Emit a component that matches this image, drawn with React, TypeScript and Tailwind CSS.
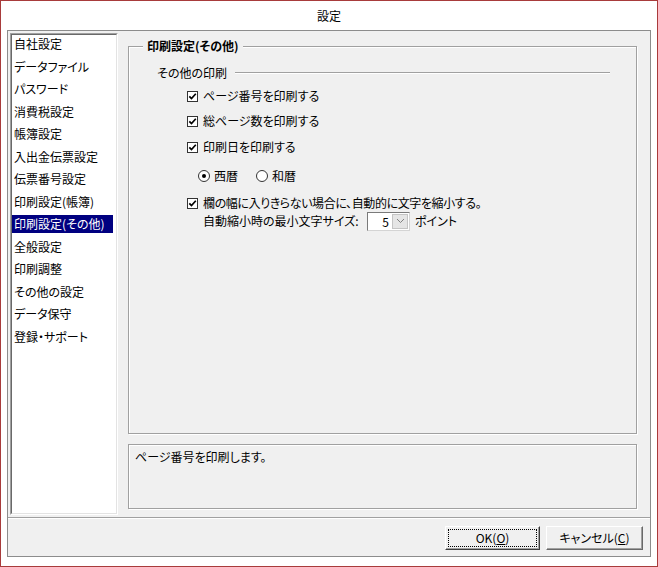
import React from 'react';

const menuItems = [
  '自社設定',
  'データファイル',
  'パスワード',
  '消費税設定',
  '帳簿設定',
  '入出金伝票設定',
  '伝票番号設定',
  '印刷設定(帳簿)',
  '印刷設定(その他)',
  '全般設定',
  '印刷調整',
  'その他の設定',
  'データ保守',
  '登録・サポート',
];

const CheckBox: React.FC = () => (
  <span className="w-[11px] h-[11px] border border-[#333333] bg-white flex items-center justify-center shrink-0">
    <svg width="9" height="9" viewBox="0 0 9 9">
      <path d="M1.3 4.3 L3.5 6.6 L7.8 1.8" fill="none" stroke="#000" strokeWidth="1.7" />
    </svg>
  </span>
);

const Radio: React.FC<{ checked?: boolean }> = ({ checked }) => (
  <span className="w-[12px] h-[12px] rounded-full border border-[#333333] bg-white flex items-center justify-center shrink-0">
    {checked && <span className="w-[4px] h-[4px] rounded-full bg-black" />}
  </span>
);

const ListBox: React.FC = () => (
  <div className="w-[108px] h-[482px] border border-t-[#a0a0a0] border-l-[#a0a0a0] border-r-white border-b-white">
    <div className="h-full border border-t-[#696969] border-l-[#696969] border-r-[#e3e3e3] border-b-[#e3e3e3] bg-white">
      {menuItems.map((item, i) => (
        <div key={item} className="h-[22.5px]">
          <div
            className={`h-[18px] mr-[3px] pl-[2px] flex items-center whitespace-nowrap ${
              i === 8 ? 'bg-[#000080] text-white' : ''
            }`}
          >
            {item}
          </div>
        </div>
      ))}
    </div>
  </div>
);

const App: React.FC = () => {
  return (
    <div className="w-[658px] h-[567px] bg-white border border-[#a83b3b] flex flex-col text-[12px] leading-[14px] text-black font-['Noto_Sans_CJK_JP',sans-serif] [font-feature-settings:'palt']">
      {/* title bar */}
      <div className="h-[29px] flex items-center justify-center">設定</div>

      {/* dialog frame */}
      <div className="ml-[6px] w-[644px] h-[527px] border border-[#8c8c8c] bg-[#f0f0f0] flex flex-col">
        <div className="h-[486px] flex pl-[2px] pt-[2px]">
          <ListBox />

          <div className="ml-[10px] w-[509px] flex flex-col">
            <fieldset className="mt-[6px] h-[395px] border border-[#a0a0a0] shadow-[inset_1px_1px_0_#ffffff,1px_1px_0_#ffffff]">
              <legend className="ml-[14px] px-[4px] font-bold bg-[#f0f0f0]">印刷設定(その他)</legend>

              <div className="pl-[28px] pr-[26px]">
                <div className="mt-[13px] flex items-center">
                  <span>その他の印刷</span>
                  <div className="ml-[8px] flex-1 h-[2px] border-t border-[#a0a0a0] border-b border-b-white" />
                </div>

                <div className="pl-[30px]">
                  <label className="mt-[9px] flex items-center gap-[5px]">
                    <CheckBox />
                    <span>ページ番号を印刷する</span>
                  </label>
                  <label className="mt-[11px] flex items-center gap-[5px]">
                    <CheckBox />
                    <span>総ページ数を印刷する</span>
                  </label>
                  <label className="mt-[12px] flex items-center gap-[5px]">
                    <CheckBox />
                    <span>印刷日を印刷する</span>
                  </label>

                  <div className="mt-[15px] pl-[11px] flex items-center">
                    <label className="flex items-center gap-[4px]">
                      <Radio checked />
                      <span>西暦</span>
                    </label>
                    <label className="ml-[18px] flex items-center gap-[4px]">
                      <Radio />
                      <span>和暦</span>
                    </label>
                  </div>

                  <label className="mt-[13px] flex items-center gap-[5px]">
                    <CheckBox />
                    <span className="tracking-[-0.4px]">欄の幅に入りきらない場合に、自動的に文字を縮小する。</span>
                  </label>
                  <div className="mt-[1px] pl-[16px] h-[20px] flex items-center">
                    <span className="w-[164px] whitespace-nowrap">自動縮小時の最小文字サイズ:</span>
                    <div className="w-[43px] h-[19px] flex border border-t-[#7a7a7a] border-l-[#7a7a7a] border-r-[#d4d4d4] border-b-[#d4d4d4] bg-white">
                      <span className="flex-1 text-right pr-[2px] leading-[17px]">5</span>
                      <span className="w-[16px] m-px bg-[#e5e5e5] border border-[#c4c4c4] flex items-center justify-center">
                        <svg width="9" height="6" viewBox="0 0 9 6">
                          <path d="M1 1 L4.5 4.5 L8 1" fill="none" stroke="#808080" strokeWidth="1" />
                        </svg>
                      </span>
                    </div>
                    <span className="ml-[5px]">ポイント</span>
                  </div>
                </div>
              </div>
            </fieldset>

            <div className="mt-[10px] h-[65px] border border-[#a0a0a0] shadow-[inset_1px_1px_0_#ffffff,1px_1px_0_#ffffff] pl-[6px] pt-[5px]">
              ページ番号を印刷します。
            </div>
          </div>
        </div>

        {/* separator */}
        <div className="h-[2px] border-t border-[#a0a0a0] border-b border-b-white" />

        {/* buttons */}
        <div className="flex justify-end gap-[6px] pt-[7px] pr-[7px]">
          <button className="w-[95px] h-[24px] flex border border-t-white border-l-white border-r-[#3c3c3c] border-b-[#3c3c3c] bg-[#f0f0f0] shadow-[inset_-1px_-1px_0_#a0a0a0]">
            <span className="flex-1 m-[2px] border border-dotted border-black flex items-center justify-center">
              OK(<u>O</u>)
            </span>
          </button>
          <button className="w-[97px] h-[24px] flex items-center justify-center border border-t-white border-l-white border-r-[#696969] border-b-[#696969] bg-[#f0f0f0] shadow-[inset_-1px_-1px_0_#a0a0a0]">
            キャンセル(<u>C</u>)
          </button>
        </div>
      </div>
    </div>
  );
};

export default App;
